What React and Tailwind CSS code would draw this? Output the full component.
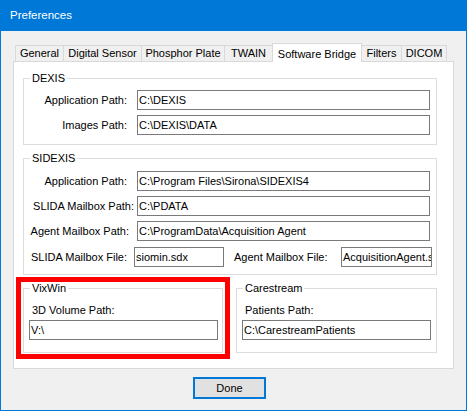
const tabs = [
  { name: 'General', cls: 'w-[48px] border-l' },
  { name: 'Digital Sensor', cls: 'w-[78px] border-l' },
  { name: 'Phosphor Plate', cls: 'w-[83px] border-l' },
  { name: 'TWAIN', cls: 'w-[48px] border-l' },
  { name: 'Software Bridge', active: true, cls: 'w-[90px] border-x' },
  { name: 'Filters', cls: 'w-[39px]' },
  { name: 'DICOM', cls: 'w-[46px] border-x' },
];

function Field({ value, className = '' }) {
  return (
    <input
      readOnly
      value={value}
      className={`h-[20px] border border-[#7a7a7a] bg-white pl-[1px] text-[11px] text-black outline-none ${className}`}
    />
  );
}

function Group({ title, className = '', children }) {
  return (
    <fieldset className={`border border-[#dcdcdc] p-0 ${className}`}>
      <legend className="ml-[6px] px-[2px] text-[11px] leading-[14px]">{title}</legend>
      {children}
    </fieldset>
  );
}

function Row({ label, pr, value }) {
  return (
    <div className="flex items-center">
      <span className={`w-[113px] text-right ${pr}`}>{label}</span>
      <Field value={value} className="w-[293px]" />
    </div>
  );
}

export default function App() {
  return (
    <div
      className="w-[467px] h-[411px] flex flex-col border-x border-b border-[#0078d7] bg-[#f0f0f0] text-[11px] text-black"
      style={{ fontFamily: '"Liberation Sans", Arial, sans-serif' }}
    >
      <div className="h-[31px] shrink-0 bg-[#0078d7] flex items-center pl-[9px] text-white text-[11.5px]">
        Preferences
      </div>

      <div className="px-[12px] pt-[12px] flex flex-col">
        {/* tab strip */}
        <div className="h-[18px] flex items-end pl-[2px]">
          {tabs.map((t) =>
            t.active ? (
              <div
                key={t.name}
                className={`relative z-10 -mb-px h-[19px] bg-white border-t border-[#d9d9d9] flex items-start justify-center pt-[2px] ${t.cls}`}
              >
                {t.name}
              </div>
            ) : (
              <div
                key={t.name}
                className={`h-[16px] bg-[#f0f0f0] border-t border-[#d9d9d9] flex items-center justify-center ${t.cls}`}
              >
                {t.name}
              </div>
            )
          )}
        </div>

        {/* panel */}
        <div className="h-[308px] w-[441px] border border-[#d9d9d9] bg-white px-[9px] pt-[9px]">
          <Group title="DEXIS" className="w-[414px] pt-[5px] pb-[9px]">
            <div className="flex flex-col gap-[5px]">
              <Row label="Application Path:" pr="pr-[10px]" value="C:\DEXIS" />
              <Row label="Images Path:" pr="pr-[10px]" value={'C:\\DEXIS\\DATA'} />
            </div>
          </Group>

          <Group title="SIDEXIS" className="w-[414px] mt-[6px] pt-[6px] pb-[7px]">
            <div className="flex flex-col gap-[5px]">
              <Row
                label="Application Path:"
                pr="pr-[10px]"
                value={'C:\\Program Files\\Sirona\\SIDEXIS4'}
              />
              <Row label="SLIDA Mailbox Path:" pr="pr-[3px]" value={'C:\\PDATA'} />
              <Row
                label="Agent Mailbox Path:"
                pr="pr-[8px]"
                value={'C:\\ProgramData\\Acquisition Agent'}
              />
              <div className="flex items-center mt-px">
                <span className="w-[110px] text-right pr-[7px]">SLIDA Mailbox File:</span>
                <Field value="siomin.sdx" className="w-[90px]" />
                <span className="ml-[10px] w-[107px]">Agent Mailbox File:</span>
                <Field value="AcquisitionAgent.sdx" className="w-[91px]" />
              </div>
            </div>
          </Group>

          <div className="flex mt-[6px] gap-[13px]">
            <div className="relative">
              <Group title="VixWin" className="w-[200px] pt-[8px] pb-[12px]">
                <div className="pl-[8px] leading-[14px]">3D Volume Path:</div>
                <Field value={'V:\\'} className="ml-[5px] mt-[3px] w-[189px]" />
              </Group>
              <div className="pointer-events-none absolute -top-[4px] -left-[7px] -right-[7px] -bottom-[6px] border-[5px] border-[#ff0000]" />
            </div>
            <Group title="Carestream" className="w-[201px] pt-[8px] pb-[12px]">
              <div className="pl-[8px] leading-[14px]">Patients Path:</div>
              <Field value={'C:\\CarestreamPatients'} className="ml-[5px] mt-[3px] w-[189px]" />
            </Group>
          </div>
        </div>

        <div className="flex mt-[8px]">
          <button className="ml-[180px] w-[73px] h-[22px] border-2 border-[#0078d7] bg-[#e1e1e1] text-[11px] text-black">
            Done
          </button>
        </div>
      </div>
    </div>
  );
}
